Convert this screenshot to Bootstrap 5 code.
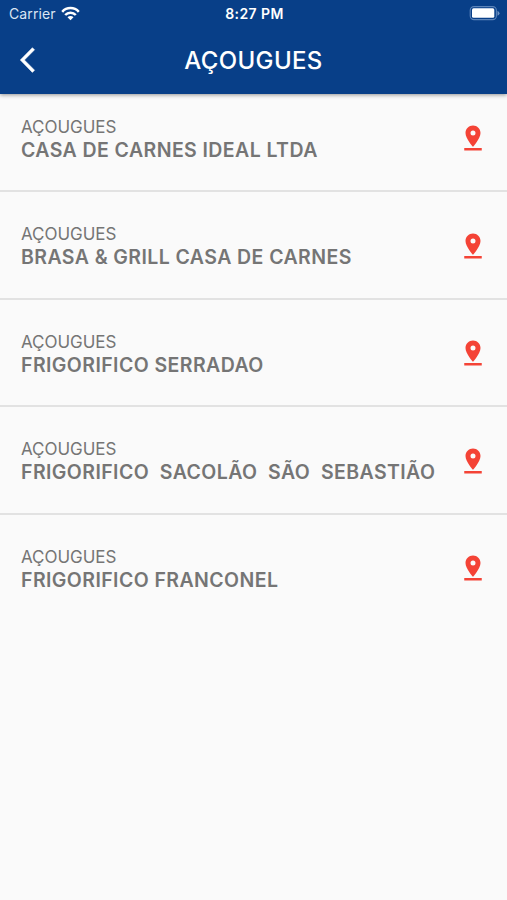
<!DOCTYPE html>
<html lang="pt-BR">
<head>
<meta charset="utf-8">
<meta name="viewport" content="width=device-width, initial-scale=1">
<title>Açougues</title>
<link href="https://cdn.jsdelivr.net/npm/bootstrap@5.3.0/dist/css/bootstrap.min.css" rel="stylesheet">
<style>
body{font-family:Inter,"Liberation Sans",sans-serif;background:#fafafa;color:#757575;overflow:hidden}
svg{display:block;flex:none}
.app-header{height:94px;background:#083f88;box-shadow:0 1px 4px rgba(0,0,0,.42)}
.status-bar{height:27px;font-size:14px;line-height:27px}
.status-bar .carrier{padding-left:9px;color:#dbe5f3;letter-spacing:.1px}
.status-bar .clock{font-weight:600;font-size:14px;letter-spacing:.4px}
.status-bar .battery{padding-right:7px}
.title-bar{height:65px;padding:0 20px}
.title-bar h1{font-size:24px;font-weight:500;line-height:30px;letter-spacing:.35px;padding-top:2px}
.shop{height:107.5px;padding:31px 19px 0 21px;border-bottom:2px solid #e2e2e2}
.shop:first-child{height:98px;padding-top:21.5px}
.shop:last-child{border-bottom:0}
.kind{font-size:17px;line-height:23px;letter-spacing:-.03px}
.shop-name{font-size:19.5px;line-height:22.5px;font-weight:600;white-space:pre;letter-spacing:.42px}
.pin{margin-top:7.5px}
</style>
</head>
<body>
<header class="app-header text-white position-relative">
  <div class="status-bar row g-0 align-items-center">
    <div class="col carrier d-flex align-items-center">Carrier
      <svg class="ms-1" width="20" height="15" viewBox="0 0 20 15" fill="none" stroke="#fff" stroke-width="2.5"><path d="M2.2 5.8a11.2 11.2 0 0 1 16.6 0M5.2 9a7.2 7.2 0 0 1 10.6 0"/><path d="M10.5 14.3l-3-3a4.2 4.2 0 0 1 6 0z" fill="#fff" stroke="none"/></svg>
    </div>
    <div class="col-auto clock">8:27 PM</div>
    <div class="col battery d-flex justify-content-end">
      <svg width="31" height="15" viewBox="0 0 31 15"><rect x="1.2" y=".6" width="26.2" height="13" rx="3.8" fill="none" stroke="#5c84b9" stroke-width="1.1"/><rect x="3" y="2.3" width="22.3" height="9.4" rx="1.5" fill="#fff"/><path d="M28.5 4.8v5q2-1 2-2.5t-2-2.5z" fill="#7093c2"/></svg>
    </div>
  </div>
  <div class="title-bar row g-0 align-items-center">
    <div class="col"><svg width="30" height="30" viewBox="0 0 24 24" fill="#fff" stroke="#fff" stroke-width=".4"><path d="M11.67 3.87 9.9 2.1.2 12l9.7 9.9 1.77-1.77L3.54 12z"/></svg></div>
    <h1 class="col-auto mb-0">AÇOUGUES</h1>
    <div class="col"></div>
  </div>
</header>
<svg class="d-none"><symbol id="pin" viewBox="0 0 24 24"><path d="M18 8c0-3.31-2.69-6-6-6S6 4.69 6 8c0 4.5 6 11 6 11s6-6.5 6-11zm-8 0a2 2 0 1 1 4 0 2 2 0 0 1-4 0zM5 20v2h14v-2H5z"/></symbol></svg>
<main>
  <div class="shop d-flex justify-content-between"><div><div class="kind">AÇOUGUES</div><div class="shop-name">CASA DE CARNES IDEAL LTDA</div></div><svg class="pin" width="30" height="30" fill="#f44336"><use href="#pin"/></svg></div>
  <div class="shop d-flex justify-content-between"><div><div class="kind">AÇOUGUES</div><div class="shop-name">BRASA &amp; GRILL CASA DE CARNES</div></div><svg class="pin" width="30" height="30" fill="#f44336"><use href="#pin"/></svg></div>
  <div class="shop d-flex justify-content-between"><div><div class="kind">AÇOUGUES</div><div class="shop-name">FRIGORIFICO SERRADAO</div></div><svg class="pin" width="30" height="30" fill="#f44336"><use href="#pin"/></svg></div>
  <div class="shop d-flex justify-content-between"><div><div class="kind">AÇOUGUES</div><div class="shop-name">FRIGORIFICO  SACOLÃO  SÃO  SEBASTIÃO</div></div><svg class="pin" width="30" height="30" fill="#f44336"><use href="#pin"/></svg></div>
  <div class="shop d-flex justify-content-between"><div><div class="kind">AÇOUGUES</div><div class="shop-name">FRIGORIFICO FRANCONEL</div></div><svg class="pin" width="30" height="30" fill="#f44336"><use href="#pin"/></svg></div>
</main>
<script src="https://cdn.jsdelivr.net/npm/bootstrap@5.3.0/dist/js/bootstrap.bundle.min.js"></script>
</body>
</html>
